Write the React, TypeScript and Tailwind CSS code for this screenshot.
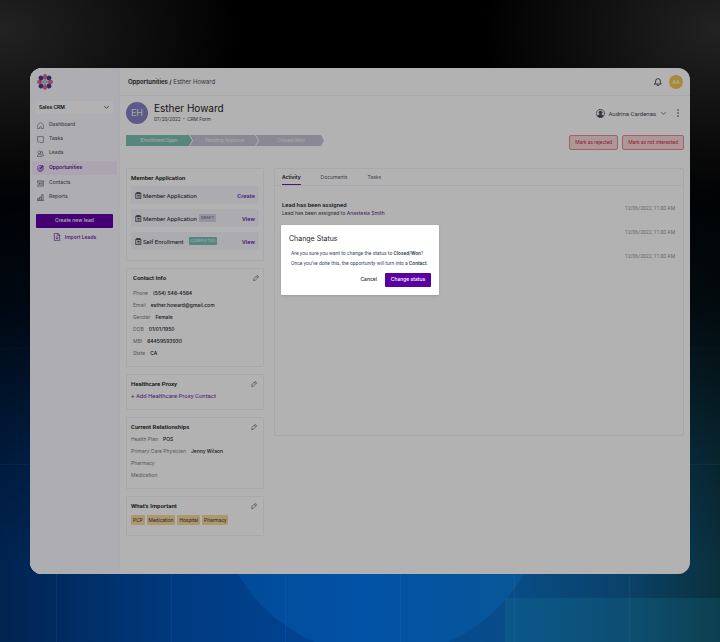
import type { ReactNode } from "react";
import { useState } from "react";

function Icon({ children, className = "size-[7px]" }: { children: ReactNode; className?: string }) {
  return (
    <svg
      viewBox="0 0 24 24"
      fill="none"
      stroke="currentColor"
      strokeWidth="2"
      strokeLinecap="round"
      strokeLinejoin="round"
      aria-hidden="true"
      className={`shrink-0 ${className}`}
    >
      {children}
    </svg>
  );
}

const HomeIcon = () => (
  <Icon>
    <path d="M2 10 12 1l10 9v13h-7v-4a3 3 0 0 0-6 0v4H2z" />
  </Icon>
);
const TasksIcon = () => (
  <Icon>
    <path d="M2 16V2h20v20H11M1 19l3 3 5-5" />
  </Icon>
);
const LeadsIcon = () => (
  <Icon>
    <circle cx="8" cy="8" r="5" />
    <path d="M1 21c0-4 3-7 7-7s7 3 7 7zM15 3.500a5 5 0 0 1 1 9.500c4 0 7 3 7 7h-4" />
  </Icon>
);
const TargetIcon = () => (
  <Icon>
    <path d="M18 3a11 11 0 1 0 4 6M15 7.500A6 6 0 1 0 18 12M12 12l7-7V1l-4 4v4M19 5h4l-4 4h-4" />
    <circle cx="12" cy="12" r="1.500" />
  </Icon>
);
const ContactsIcon = () => (
  <Icon>
    <rect x="1" y="3" width="22" height="18" />
    <path d="M1 7h22M5 17c0-3 6-3 6 0M14 12h5M14 16h5" />
    <circle cx="8" cy="12" r="1.500" />
  </Icon>
);
const ReportsIcon = () => (
  <Icon>
    <path d="M1 22h22M2 22v-7h5v7M9 22V10h5v12M16 22V2h5v20" />
  </Icon>
);
const ImportIcon = () => (
  <Icon className="size-[8px]">
    <path d="M14 1H4v22h16V7zM14 1v6h6M12 9v9M8.500 14.500 12 18l3.500-3.500" />
  </Icon>
);
const PencilIcon = () => (
  <Icon className="size-[6px]">
    <path strokeWidth="2.500" d="M3 22l1-8L15 3a3 3 0 0 1 4 0l2 2a3 3 0 0 1 0 4L10 20zM14 5l6 6" />
  </Icon>
);
const ClipboardIcon = () => (
  <Icon className="size-[7px]">
    <path strokeWidth="2.500" d="M4 4h16v19H4zM8 1h8v5H8zM9 12h6M9 17h6" />
  </Icon>
);
const ChevronIcon = ({ className }: { className?: string }) => (
  <Icon className={className}>
    <path strokeWidth="3.500" d="m3 7 9 9 9-9" />
  </Icon>
);
const BellIcon = () => (
  <Icon className="size-[8px]">
    <path strokeWidth="2.500" d="M2 18h20c-2-2-3-4-3-9a7 7 0 0 0-14 0c0 5-1 7-3 9zM9 21a3 3 0 0 0 6 0" />
  </Icon>
);
const UserIcon = () => (
  <Icon className="size-[9px]">
    <circle cx="12" cy="12" r="11" />
    <circle cx="12" cy="9" r="4" fill="currentColor" />
    <path d="M5 19c0-6 14-6 14 0-4 4-10 4-14 0z" fill="currentColor" />
  </Icon>
);

function Logo() {
  return (
    <svg viewBox="-12 -12 24 24" className="size-[16px]" role="img" aria-label="Sales CRM">
      {[0, 90, 180, 270].map((a) => (
        <g key={a} transform={`rotate(${a})`}>
          <ellipse cx="0" cy="-8" rx="3.200" ry="4" fill="#e0608f" />
          <ellipse cx="0" cy="-8.500" rx="3.600" ry="3.800" fill="#4b3a80" transform="rotate(45)" />
          <circle cx="0" cy="-3.800" r="2" fill="#e58fb8" />
        </g>
      ))}
      <circle r="3.200" fill="#6fc9c6" />
      <circle r="1.200" fill="#d9f2f0" />
    </svg>
  );
}

function Backdrop() {
  return (
    <svg
      viewBox="0 0 720 642"
      preserveAspectRatio="none"
      className="absolute inset-0 size-full"
      aria-hidden="true"
    >
      <defs>
        <linearGradient id="blue" x1="0" x2="1" y1="0" y2="0">
          <stop offset="0" stopColor="#00234f" />
          <stop offset="0.250" stopColor="#003a80" />
          <stop offset="0.500" stopColor="#00479a" />
          <stop offset="0.700" stopColor="#084d88" />
          <stop offset="0.880" stopColor="#0a4166" />
          <stop offset="1" stopColor="#0a303c" />
        </linearGradient>
        <linearGradient id="fall" x1="0" x2="0" y1="0" y2="1">
          <stop offset="0.250" stopColor="#000" />
          <stop offset="0.480" stopColor="#000" stopOpacity="0.780" />
          <stop offset="0.720" stopColor="#000" stopOpacity="0.250" />
          <stop offset="0.880" stopColor="#000" stopOpacity="0" />
        </linearGradient>
        <radialGradient id="haze" cx="0.500" cy="0.500" r="0.500">
          <stop offset="0" stopColor="#222" />
          <stop offset="1" stopColor="#222" stopOpacity="0" />
        </radialGradient>
      </defs>
      <rect width="720" height="642" fill="url(#blue)" />
      <circle cx="381" cy="490" r="166" fill="#0a75cf" fillOpacity="0.240" />
      <rect x="505" y="598" width="215" height="44" fill="#1c8aa0" fillOpacity="0.180" />
      <g stroke="#4aa0e8" strokeOpacity="0.100">
        <path d="M56.500 0v642M171.500 0v642M285.500 0v642M400.500 0v642M514.500 0v642M629.500 0v642" />
        <path d="M0 233.500h720M0 348.500h720M0 464.500h720" />
      </g>
      <rect width="720" height="642" fill="url(#fall)" />
      <ellipse cx="0" cy="30" rx="240" ry="170" fill="url(#haze)" />
      <ellipse cx="720" cy="30" rx="240" ry="170" fill="url(#haze)" />
    </svg>
  );
}

const navItems = [
  { label: "Dashboard", icon: <HomeIcon /> },
  { label: "Tasks", icon: <TasksIcon /> },
  { label: "Leads", icon: <LeadsIcon /> },
  { label: "Opportunities", icon: <TargetIcon />, active: true },
  { label: "Contacts", icon: <ContactsIcon /> },
  { label: "Reports", icon: <ReportsIcon /> },
];

function Sidebar() {
  return (
    <aside className="flex w-[90px] shrink-0 flex-col border-r border-[#f6f5fa] bg-[#f9f8ff]">
      <div className="px-[7px] pt-[6px]">
        <Logo />
      </div>
      <div className="relative mx-[6px] mt-[11px]">
        <select
          aria-label="Workspace"
          className="block h-[13px] w-full appearance-none rounded-[1px] bg-white px-[3px] text-[5px] font-semibold text-[#18181f]"
        >
          <option>Sales CRM</option>
        </select>
        <span className="pointer-events-none absolute top-[4px] right-[4px] text-[#2b2b33]">
          <ChevronIcon className="size-[5px]" />
        </span>
      </div>
      <nav aria-label="Main" className="mt-[4px] flex flex-col px-[2px]">
        {navItems.map((item) => (
          <a
            key={item.label}
            href="#"
            aria-current={item.active ? "page" : undefined}
            className={`flex h-[14px] items-center gap-[5px] rounded-[1px] pl-[5px] text-[5px] font-medium ${
              item.active ? "my-px bg-[#f6ebfe] font-semibold text-[#5a1a90]" : "text-[#5c5c6a]"
            }`}
          >
            {item.icon}
            {item.label}
          </a>
        ))}
      </nav>
      <div className="mt-[10px] flex flex-col gap-[5px] px-[6px]">
        <button className="h-[14px] rounded-[1px] bg-[#6200a8] text-[5px] font-medium text-white">
          Create new lead
        </button>
        <button className="flex items-center justify-center gap-[4px] text-[5px] leading-[8px] font-medium text-[#5f2399]">
          <ImportIcon />
          Import Leads
        </button>
      </div>
    </aside>
  );
}

function Card({
  title,
  editable,
  className = "px-[4px]",
  children,
}: {
  title: string;
  editable?: boolean;
  className?: string;
  children: ReactNode;
}) {
  return (
    <section className={`rounded-[1px] border border-[#f0f1f8] pt-[4px] ${className}`}>
      <div className="flex h-[10px] items-center justify-between pb-px">
        <h2 className="font-['Roboto',sans-serif] text-[6px] leading-[8px] font-semibold text-[#1b1b22]">{title}</h2>
        {editable && (
          <button aria-label={`Edit ${title}`} className="mr-[2px] text-[#5c5c6a]">
            <PencilIcon />
          </button>
        )}
      </div>
      {children}
    </section>
  );
}

const applications = [
  { name: "Member Application", action: "Create" },
  { name: "Member Application", tag: "DRAFT", tagStyle: "bg-[#d5d3e2] text-[#5e5a7c]", action: "View" },
  { name: "Self Enrollment", tag: "COMPLETED", tagStyle: "ml-[5px] bg-[#7ac0b6] text-[#eefaf8]", action: "View" },
];

function Fields({ rows }: { rows: string[][] }) {
  return (
    <dl className="text-[5px] leading-[12px]">
      {rows.map(([name, value]) => (
        <div key={name} className="flex gap-[5px]">
          <dt className="text-[#7c7c86]">{name}</dt>
          <dd className="font-medium text-[#24242c]">{value}</dd>
        </div>
      ))}
    </dl>
  );
}

const contact = [
  ["Phone", "(554) 546-4564"],
  ["Email", "esther.howard@gmail.com"],
  ["Gender", "Female"],
  ["DOB", "01/01/1950"],
  ["MBI", "64459593930"],
  ["State", "CA"],
];

const relationships = [
  ["Health Plan", "POS"],
  ["Primary Care Physician", "Jenny Wilson"],
  ["Pharmacy", ""],
  ["Medication", ""],
];

function Stages() {
  return (
    <ol className="flex h-[11px] font-['Roboto',sans-serif] text-[5px] leading-[11px] text-[#f2f2f8]">
      {["Enrollment Open", "Pending Approval", "Closed/Won"].map((label, i) => (
        <li key={label} className="grid w-[66px] *:col-start-1 *:row-start-1">
          <svg viewBox="0 0 66 11" className="h-[11px] w-full overflow-visible" aria-hidden="true">
            <path
              d={i === 0 ? "M0 0h63l3 5.500-3 5.500H0z" : "M-2 0h65l3 5.500-3 5.500H-2l3-5.500z"}
              className={i === 0 ? "fill-[#7cc0b3]" : "fill-[#c6c3d4]"}
            />
          </svg>
          <span className="text-center">{label}</span>
        </li>
      ))}
    </ol>
  );
}

function Activity() {
  const [tab, setTab] = useState("Activity");
  return (
    <section className="min-h-[268px] min-w-0 flex-1 rounded-[2px] border border-[#f0f1f8]">
      <div role="tablist" className="flex h-[17px] gap-[20px] border-b border-[#f0f1f8] px-[7px] text-[5px]">
        {["Activity", "Documents", "Tasks"].map((label) => (
          <button
            key={label}
            role="tab"
            aria-selected={tab === label}
            onClick={() => setTab(label)}
            className={`border-b pt-[3px] ${
              tab === label ? "border-[#6b1fae] font-semibold text-[#1b1b22]" : "border-transparent text-[#5c5c6a]"
            }`}
          >
            {label}
          </button>
        ))}
      </div>
      <ul className="pt-[11px] pr-[8px] pl-[7px]">
        {[0, 1, 2].map((n) => (
          <li key={n} className="flex h-[24px] items-center justify-between font-['Roboto',sans-serif]">
            <div>
              {n === 0 && (
                <>
                  <h3 className="text-[6px] leading-[9px] font-medium text-[#24242c]">Lead has been assigned</h3>
                  <p className="font-['Inter',sans-serif] text-[5px] leading-[9px] text-[#3c3c48]">
                    Lead has been assigned to{" "}
                    <a href="#" className="text-[#5a2a88]">
                      Anastasia Smith
                    </a>
                  </p>
                </>
              )}
            </div>
            <time className="text-[5px] text-[#92929a]">12/06/2022, 11:00 AM</time>
          </li>
        ))}
      </ul>
    </section>
  );
}

function ChangeStatusDialog() {
  return (
    <div className="absolute inset-0 flex items-start justify-center bg-black/30 pt-[157px]">
      <div
        role="dialog"
        aria-labelledby="dialog-title"
        className="w-[158px] rounded-[1px] bg-white px-[8px] pt-[9px] pb-[8px] shadow-sm"
      >
        <h2 id="dialog-title" className="text-[7px] leading-[10px] text-[#24242c]">
          Change Status
        </h2>
        <div className="mt-[4px] px-[2px] font-['Roboto',sans-serif] text-[5px] leading-[10px] whitespace-nowrap text-[#3d4663]">
          <p>
            Are you sure you want to change the status to <strong className="font-semibold">Closed/Won</strong>?
          </p>
          <p>
            Once you’ve done this, the opportunity will turn into a <strong className="font-semibold">Contact</strong>.
          </p>
        </div>
        <div className="mt-[5px] flex justify-end gap-[8px] text-[5px] font-medium">
          <button className="text-[#24242c]">Cancel</button>
          <button className="h-[14px] w-[46px] rounded-[1px] bg-[#5b00a0] text-white">Change status</button>
        </div>
      </div>
    </div>
  );
}

export default function App() {
  return (
    <div className="relative min-h-screen bg-black px-[30px] py-[68px] font-['Inter',sans-serif]">
      <Backdrop />
      <div className="relative flex overflow-hidden rounded-[12px] bg-white">
        <Sidebar />
        <div className="min-w-0 flex-1">
          <header className="flex h-[28px] items-center justify-between border-b border-[#f3f2f7] pr-[7px] pl-[8px]">
            <p className="text-[6px] text-[#4a4a58]">
              <a href="#" className="font-semibold text-[#1b1b22]">
                Opportunities /
              </a>{" "}
              Esther Howard
            </p>
            <div className="flex items-center gap-[7px] text-[#2b2b33]">
              <button aria-label="Notifications">
                <BellIcon />
              </button>
              <span className="size-[14px] rounded-full bg-[#f2c556] text-center text-[5px] leading-[14px] text-white">
                AA
              </span>
            </div>
          </header>
          <main className="px-[6px] pt-[6px] pb-[38px]">
            <div className="flex items-center justify-between">
              <div className="flex items-center gap-[6px]">
                <span className="size-[22px] rounded-full bg-[#8681c6] text-center text-[9px] leading-[22px] text-[#efeff6]">
                  EH
                </span>
                <div>
                  <h1 className="text-[10px] leading-[13px] text-[#1b1b22]">Esther Howard</h1>
                  <p className="font-['Roboto',sans-serif] text-[5px] leading-[9px] text-[#4a4a58]">
                    07/20/2022 &nbsp;•&nbsp; CRM Form
                  </p>
                </div>
              </div>
              <div className="flex items-center gap-[6px] text-[#4a4a58]">
                <button className="flex items-center gap-[3px] font-['Roboto',sans-serif] text-[6px]">
                  <UserIcon />
                  Audrina Cardenas
                  <ChevronIcon className="ml-[2px] size-[5px]" />
                </button>
                <button aria-label="More actions" className="px-[5px]">
                  <svg viewBox="0 0 2 8" className="h-[8px] w-[2px]" fill="currentColor" aria-hidden="true">
                    <circle cx="1" cy="1" r="0.800" />
                    <circle cx="1" cy="4" r="0.800" />
                    <circle cx="1" cy="7" r="0.800" />
                  </svg>
                </button>
              </div>
            </div>
            <div className="mt-[11px] flex justify-between">
              <Stages />
              <div className="flex gap-[4px] font-['Roboto',sans-serif] text-[5px] text-[#cf2f3f]">
                {["Mark as rejected", "Mark as not interested"].map((label) => (
                  <button key={label} className="h-[15px] rounded-[2px] border border-[#e58a90] bg-[#fad8dc] px-[5px]">
                    {label}
                  </button>
                ))}
              </div>
            </div>
            <div className="mt-[18px] flex items-start gap-[10px]">
              <div className="flex w-[138px] shrink-0 flex-col gap-[7px]">
                <Card title="Member Application" className="px-[4px] pb-[10px]">
                  <ul className="mt-[3px] flex flex-col gap-[5px]">
                    {applications.map((app, i) => (
                      <li
                        key={i}
                        className="flex h-[18px] items-center rounded-[1px] bg-[#f7f6fc] px-[4px] font-['Roboto',sans-serif] text-[6px] text-[#24242c]"
                      >
                        <ClipboardIcon />
                        <span className="ml-px">{app.name}</span>
                        {app.tag && (
                          <span
                            className={`mx-[2px] rounded-[1px] px-[2px] font-['Inter',sans-serif] text-[4px] leading-[8px] ${app.tagStyle}`}
                          >
                            {app.tag}
                          </span>
                        )}
                        <a href="#" className="ml-auto font-medium text-[#6b1fae]">
                          {app.action}
                        </a>
                      </li>
                    ))}
                  </ul>
                </Card>
                <Card title="Contact Info" editable className="pr-[2px] pb-[7px] pl-[6px]">
                  <div className="mt-[4px]">
                    <Fields rows={contact} />
                  </div>
                </Card>
                <Card title="Healthcare Proxy" editable className="px-[4px] pb-[7px]">
                  <a
                    href="#"
                    className="mt-px block font-['Roboto',sans-serif] text-[6px] leading-[12px] text-[#6b1fae]"
                  >
                    + Add Healthcare Proxy Contact
                  </a>
                </Card>
                <Card title="Current Relationships" editable className="px-[4px] pb-[7px]">
                  <div className="mt-px">
                    <Fields rows={relationships} />
                  </div>
                </Card>
                <Card title="What's Important" editable className="px-[4px] pb-[10px]">
                  <ul className="mt-[4px] flex gap-[2px] font-['Roboto',sans-serif] text-[5px] leading-[10px] text-[#4a3a20]">
                    {["PCP", "Medication", "Hospital", "Pharmacy"].map((tag) => (
                      <li key={tag} className="rounded-[1px] bg-[#f8d7a4] px-[2px]">
                        {tag}
                      </li>
                    ))}
                  </ul>
                </Card>
              </div>
              <Activity />
            </div>
          </main>
        </div>
        <ChangeStatusDialog />
      </div>
    </div>
  );
}
